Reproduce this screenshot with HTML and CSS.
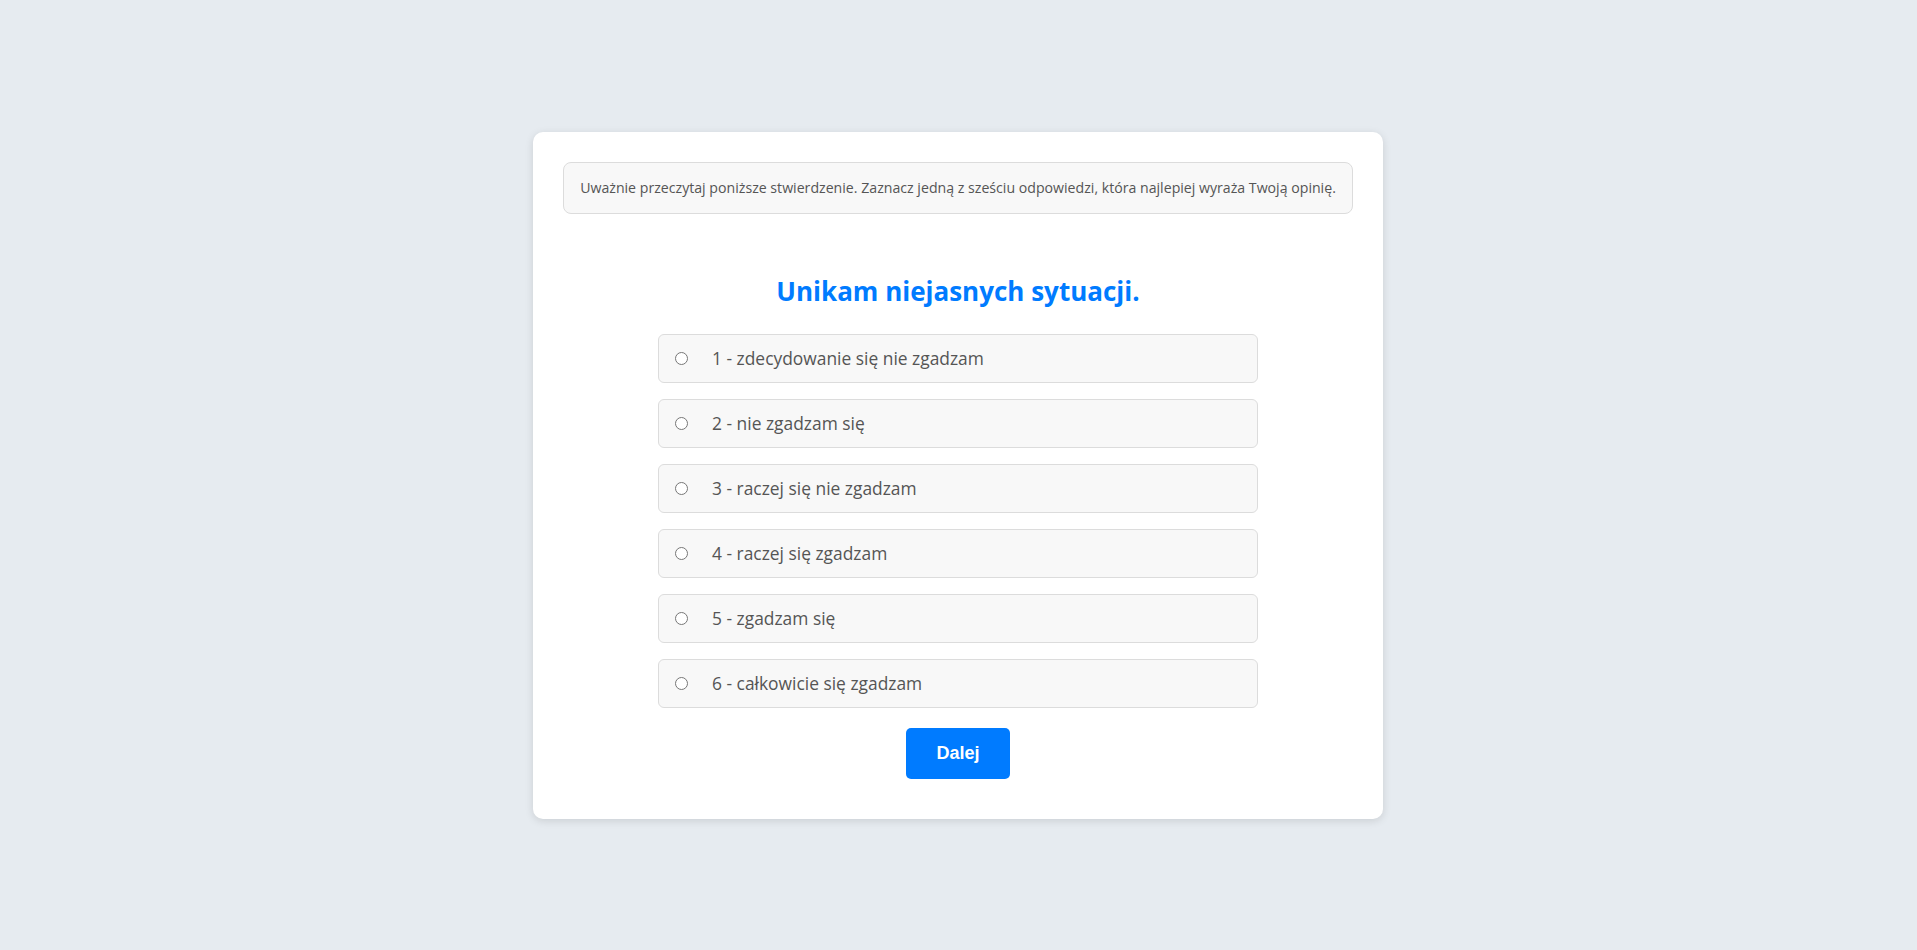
FILE: index.html
```html
<!DOCTYPE html>
<html lang="pl">
<head>
<meta charset="utf-8">
<title>Test</title>
<link rel="stylesheet" href="styles.css">
</head>
<body>
<main class="page">
  <section class="card">
    <div class="instruction">Uważnie przeczytaj poniższe stwierdzenie. Zaznacz jedną z sześciu odpowiedzi, która najlepiej wyraża Twoją opinię.</div>
    <h2 class="statement">Unikam niejasnych sytuacji.</h2>
    <form class="options">
      <label class="option"><input type="radio" name="a" value="1"><span>1 - zdecydowanie się nie zgadzam</span></label>
      <label class="option"><input type="radio" name="a" value="2"><span>2 - nie zgadzam się</span></label>
      <label class="option"><input type="radio" name="a" value="3"><span>3 - raczej się nie zgadzam</span></label>
      <label class="option"><input type="radio" name="a" value="4"><span>4 - raczej się zgadzam</span></label>
      <label class="option"><input type="radio" name="a" value="5"><span>5 - zgadzam się</span></label>
      <label class="option"><input type="radio" name="a" value="6"><span>6 - całkowicie się zgadzam</span></label>
      <button type="button" class="next">Dalej</button>
    </form>
  </section>
</main>
</body>
</html>
```
FILE: styles.css
```css
* { box-sizing: border-box; }
html, body { margin: 0; padding: 0; }
body {
  background: #e6ebf0;
  font-family: "Open Sans", "Noto Sans", sans-serif;
  color: #555;
}
.page {
  min-height: 100vh;
  display: flex;
  align-items: center;
  justify-content: center;
  padding-right: 1px;
}
.card {
  width: 850px;
  background: #fff;
  border-radius: 10px;
  padding: 30px;
  box-shadow: 0 2px 8px rgba(0,0,0,0.12);
  display: flex;
  flex-direction: column;
  align-items: center;
}
.instruction {
  width: 100%;
  background: #f8f8f8;
  border: 1px solid #dcdcdc;
  border-radius: 8px;
  padding: 16px 10px;
  font-size: 14.15px;
  line-height: 18px;
  text-align: center;
  color: #555;
}
.statement {
  margin: 60px 0 26px;
  font-size: 26px;
  line-height: 34px;
  font-weight: 700;
  color: #007bff;
  text-align: center;
}
.options {
  width: 600px;
  display: flex;
  flex-direction: column;
  align-items: center;
  gap: 16px;
}
.option {
  width: 100%;
  height: 49px;
  display: flex;
  align-items: center;
  padding: 0 16px;
  background: #f8f8f8;
  border: 1px solid #dcdcdc;
  border-radius: 6px;
  font-size: 17.4px;
  color: #555;
  cursor: pointer;
}
.option input {
  width: 13px;
  height: 13px;
  margin: 0 24px 0 0;
}
.next {
  width: 104px;
  height: 51px;
  margin-top: 4px;
  margin-bottom: 10px;
  padding: 0;
  font-family: "Liberation Sans", Arial, sans-serif;
  font-size: 18px;
  font-weight: 700;
  color: #fff;
  background: #007bff;
  border: none;
  border-radius: 5px;
  cursor: pointer;
}
```
